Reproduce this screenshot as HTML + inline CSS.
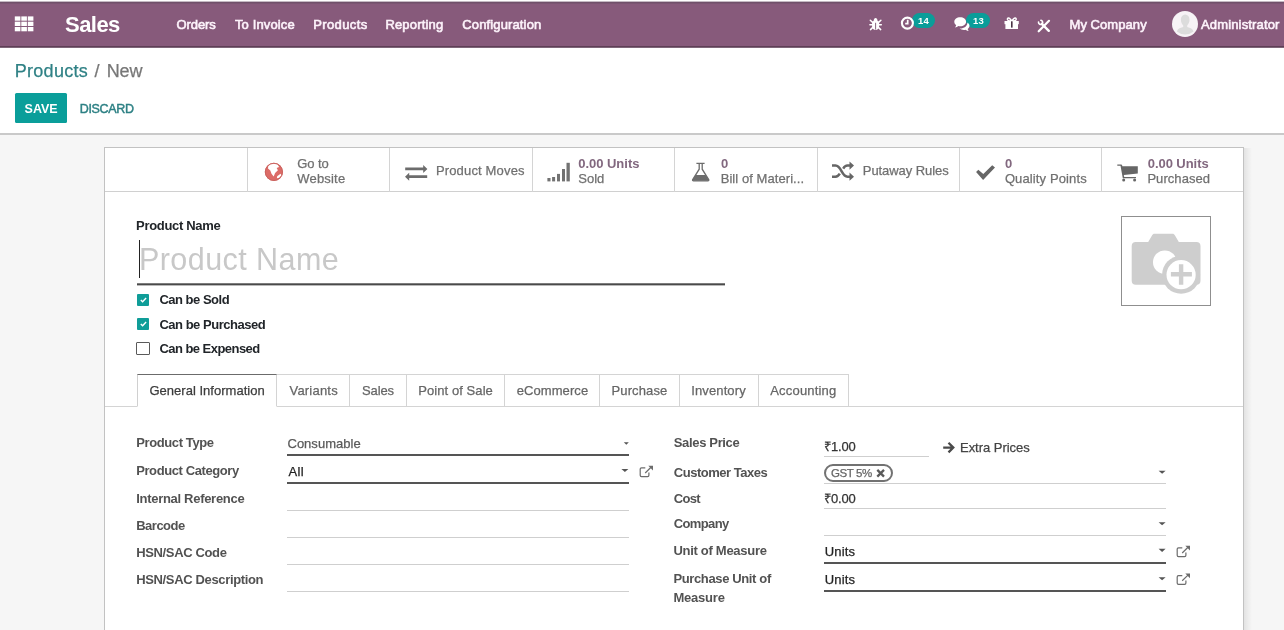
<!DOCTYPE html>
<html lang="en"><head><meta charset="utf-8"><title>Products / New - Odoo</title>
<style>
*{box-sizing:border-box}
html,body{margin:0;padding:0}
body{width:1284px;height:630px;overflow:hidden;position:relative;background:#f6f6f6;font-family:"Liberation Sans",sans-serif;font-size:13px;color:#4c4c4c}
.abs,.t,svg.i{position:absolute}
.t{white-space:pre;line-height:1;text-decoration:none;margin:0;padding:0;display:block}
#nav{left:0;top:0;width:1284px;height:48px;background:linear-gradient(to bottom,#fff 0,#fff 1px,#c5b9c3 1px,#c5b9c3 2px,#70506a 2px,#70506a 3px,#7b5572 3px,#7b5572 4px,#875a7b 4px,#875a7b 46px,#5e3f56 46px,#5e3f56 47px,#7e6578 47px,#7e6578 48px)}
#cp{left:0;top:48px;width:1284px;height:87px;background:#fff;border-bottom:2px solid #c9c9c9}
#sheet{left:104px;top:147px;width:1140px;height:500px;background:#fff;border:1px solid #c2c2c2;box-shadow:none}
#bbox{left:105px;top:148px;width:1138px;height:44px;border-bottom:1px solid #d0d0d0}
.vd{top:148px;width:1px;height:44px;background:#d4d4d4}
#save{left:15px;top:93px;width:52px;height:30px;background:#0a9e9a;border-radius:1.5px}
.badge{height:15.600px;border-radius:7.800px;background:#0a9d99}
#avatar{left:1172px;top:11px;width:26px;height:26px;border-radius:50%;background:#f7f3f6;overflow:hidden}
#nameline{left:137px;top:283px;width:588px;height:3px;background:linear-gradient(to bottom,#7d7d7d 0,#7d7d7d 1px,#4a4a4a 1px,#4a4a4a 2px,#b9b9b9 2px,#b9b9b9 3px)}
#caret0{left:139px;top:240px;width:1px;height:38px;background:#222}
.cb{left:137px;width:12px;height:12px;background:#0f9d98;border-radius:1px}
.cb.off{left:136px;width:14px;height:13px;background:#fff;border:1px solid #5a5a5a}
#imgbox{left:1121px;top:216px;width:90px;height:90px;border:1px solid #8f8f8f;background:#fff}
#tabline{left:105px;top:406px;width:1138px;height:1px;background:#d4d4d4}
.tab{top:374px;height:33px;border:1px solid #d4d4d4;border-left:none;background:#fff}
.tab.active{border-left:1px solid #d0d0d0;border-top:1px solid #6b6b6b;border-bottom:1px solid #fff}
.ln{height:1px;background:#cfcfcf}
.ln.dk{height:2px;background:#555}
#texts{position:absolute;left:0;top:0;width:1284px;height:630px;will-change:transform;transform:translateZ(0)}
.tag{left:824px;top:464px;width:69px;height:18px;border:2px solid #727272;border-radius:9px;background:#fff}
svg.i{overflow:visible}
#shadowr{left:1244px;top:148px;width:8px;height:482px;background:linear-gradient(to right,rgba(0,0,0,.08),rgba(0,0,0,0))}

</style></head>
<body>
<div class="abs" id="nav"></div>
<div class="abs" id="cp"></div>
<div class="abs" id="save"></div>
<div class="abs" id="sheet"></div>
<div class="abs" id="shadowr"></div>
<div class="abs" id="bbox"></div>
<div class="abs vd" style="left:247px"></div>
<div class="abs vd" style="left:389px"></div>
<div class="abs vd" style="left:531.5px"></div>
<div class="abs vd" style="left:674px"></div>
<div class="abs vd" style="left:816.5px"></div>
<div class="abs vd" style="left:958.5px"></div>
<div class="abs vd" style="left:1100.5px"></div>
<div class="abs badge" style="left:912px;top:12.600px;width:22.700px"></div>
<div class="abs badge" style="left:966.300px;top:12.600px;width:24px"></div>
<div class="abs" id="avatar"></div>
<div class="abs" id="nameline"></div>
<div class="abs" id="caret0"></div>
<div class="abs cb" style="top:294px"></div>
<div class="abs cb" style="top:318px"></div>
<div class="abs cb off" style="top:342.3px"></div>
<div class="abs" id="imgbox"></div>
<div class="abs" id="tabline"></div>
<div class="abs tab active" style="left:137px;width:140px"></div>
<div class="abs tab" style="left:277px;width:73px"></div>
<div class="abs tab" style="left:350px;width:57px"></div>
<div class="abs tab" style="left:407px;width:98px"></div>
<div class="abs tab" style="left:505px;width:95px"></div>
<div class="abs tab" style="left:600px;width:80px"></div>
<div class="abs tab" style="left:680px;width:78.5px"></div>
<div class="abs tab" style="left:758.5px;width:90.5px"></div>
<!-- field lines -->
<div class="abs ln dk" style="left:287px;top:453.9px;width:342px"></div>
<div class="abs ln dk" style="left:287px;top:481.7px;width:342px"></div>
<div class="abs ln" style="left:287px;top:509.6px;width:342px"></div>
<div class="abs ln" style="left:287px;top:536.8px;width:342px"></div>
<div class="abs ln" style="left:287px;top:563.9px;width:342px"></div>
<div class="abs ln" style="left:287px;top:590.8px;width:342px"></div>
<div class="abs ln" style="left:824px;top:455.9px;width:105px"></div>
<div class="abs ln" style="left:824px;top:483.1px;width:341.7px"></div>
<div class="abs ln" style="left:824px;top:507.9px;width:341.7px"></div>
<div class="abs ln" style="left:824px;top:534.5px;width:341.7px"></div>
<div class="abs ln dk" style="left:824px;top:561.7px;width:341.7px"></div>
<div class="abs ln dk" style="left:824px;top:589.7px;width:341.7px"></div>
<div class="abs tag"></div>

<!-- apps grid -->
<svg class="i" style="left:0;top:0" width="1284" height="630" viewBox="0 0 1284 630">
<g fill="#fff">
<rect x="14.8" y="16.4" width="5.6" height="4.3"/><rect x="21.3" y="16.4" width="5.6" height="4.3"/><rect x="27.8" y="16.4" width="5.6" height="4.3"/>
<rect x="14.8" y="21.7" width="5.6" height="4.3"/><rect x="21.3" y="21.7" width="5.6" height="4.3"/><rect x="27.8" y="21.7" width="5.6" height="4.3"/>
<rect x="14.8" y="27" width="5.6" height="4.3"/><rect x="21.3" y="27" width="5.6" height="4.3"/><rect x="27.8" y="27" width="5.6" height="4.3"/>
</g>
<!-- bug -->
<g fill="#fff" stroke="#fff" stroke-linecap="round">
<path d="M872.100 23.300c0-1.200.600-2 1.500-2.300.100-1.800 1-2.900 2-2.900s1.900 1.100 2 2.900c.900.300 1.500 1.100 1.500 2.300v3.200c0 1.900-1.600 3.400-3.500 3.400s-3.500-1.500-3.500-3.400z" stroke="none"/>
<path d="M869.900 24.800h11.400M870.300 20.200l2.300 2.200M880.900 20.200l-2.300 2.200M870.500 29.600l2.300-2.200M880.700 29.600l-2.300-2.200" stroke-width="1.500" fill="none"/>
<path d="M875.600 23.200v6" stroke="#7a5470" stroke-width=".9" fill="none"/>
</g>
<!-- clock -->
<g fill="none" stroke="#fff">
<circle cx="907.4" cy="23.1" r="5.500" stroke-width="2.100"/>
<path d="M907.700 19.800v3.900h-2.500" stroke-width="1.700"/>
</g>
<!-- comments -->
<g fill="#fff">
<path d="M960.2 17.2c3.3 0 5.9 2 5.9 4.5s-2.6 4.5-5.9 4.500c-.6 0-1.200-.1-1.800-.2-.9.800-2.100 1.300-3.400 1.400.6-.6 1.100-1.400 1.200-2.300-1.200-.800-1.900-2-1.900-3.400 0-2.500 2.600-4.500 5.900-4.500z"/>
<path d="M967.400 22.400c1.300.8 2.100 2 2.100 3.300 0 1.300-.7 2.400-1.800 3.200.1.800.5 1.500 1.100 2.100-1.200-.1-2.400-.6-3.200-1.300-.6.100-1.100.2-1.700.2-1.700 0-3.200-.5-4.300-1.400.2 0 .4 0 .600 0 3.900 0 7.200-2.500 7.200-5.800 0-.1 0-.2 0-.3z"/>
</g>
<!-- gift -->
<g fill="#fff">
<path d="M1004.500 21h14.300v3.200h-14.300z"/>
<path d="M1005.400 24h12.600v5h-12.600z"/>
<path d="M1011.700 21.200c-1-2-2.200-3.500-3.400-3.300-1 .200-1.200 1.500-.400 2.300.700.600 2.200 1 3.800 1zm.200 0c1-2 2.200-3.500 3.400-3.300 1 .200 1.200 1.500.400 2.300-.700.600-2.200 1-3.800 1z" fill="none" stroke="#fff" stroke-width="1.500"/>
<rect x="1011" y="21.300" width="1.600" height="6.300" fill="#4a3345"/>
</g>
<!-- tools -->
<g fill="none" stroke="#fff" stroke-linecap="round">
<path d="M1038.700 31.300l10.300-10.500" stroke-width="2.200"/>
<path d="M1041.800 23.800l7 7" stroke-width="2.400"/>
<path d="M1038.500 22a2.300 2.300 0 0 0 3.300 2.300M1040.900 20.300a2.300 2.300 0 0 1 1.600 3.200" stroke-width="1.600"/>
</g>
<!-- avatar silhouette -->
<g fill="#dcdcdc">
<path d="M1185.200 14.600c2.600 0 4.300 2.100 4.300 5.200 0 2.400-1 4.500-2.300 5.600v1.500c3.300.800 5.600 2 6.300 4.500a13 13 0 0 1-16.600 0c.700-2.500 3-3.700 6.300-4.500v-1.500c-1.300-1.100-2.300-3.200-2.300-5.600 0-3.100 1.700-5.200 4.300-5.200z"/>
</g>
<!-- globe -->
<g>
<circle cx="273.900" cy="171.900" r="9.100" fill="#dc6b67"/>
<path d="M268.300 165.800c2.500-2.200 6.500-3 9.300-1.200l1.500 2.300-2.400 1.200 1.200 2.200-2.800 2.600-1.400 3.500-2.200-2.600-1.200-3.200-2.300-2.200z" fill="#fff"/>
<path d="M277.200 176.300l3.300-2.500 1.200 1.400-2.300 2.600-2.500.5z" fill="#fff"/>
<circle cx="273.900" cy="171.900" r="8.600" fill="none" stroke="#c9635f" stroke-width="1"/>
</g>
<!-- exchange -->
<g fill="#6c6c6c">
<path d="M405.200 167.500h18v-2.600l4.200 4-4.200 4v-2.600h-18z"/>
<path d="M427.200 175.300h-18v-2.600l-4.200 4 4.200 4v-2.600h18z"/>
</g>
<!-- signal -->
<g fill="#727272">
<rect x="547.400" y="178" width="3.100" height="3.400"/><rect x="552.100" y="177" width="3" height="4.400"/><rect x="557" y="173.900" width="3" height="7.500"/><rect x="562" y="169" width="3" height="12.400"/><rect x="566.500" y="162.800" width="3.300" height="18.600"/>
</g>
<!-- flask -->
<g>
<path d="M696.400 163.400h8.200M699.200 163.600v5.600l-6.500 10.400c-.400.700 0 1.300.800 1.300h14.400c.800 0 1.200-.600.800-1.300l-6.500-10.400v-5.600" fill="none" stroke="#6c6c6c" stroke-width="1.300"/>
<path d="M695.500 175h10.100l3 4.800c.300.600 0 1-.700 1h-14.700c-.700 0-1-.400-.700-1z" fill="#6c6c6c"/>
</g>
<!-- shuffle -->
<g fill="none" stroke="#666" stroke-width="2.500">
<path d="M832 165.600h3.500c6 0 6 11.100 12 11.100h3"/>
<path d="M832 176.700h3.500c2 0 3.300-1.300 4.300-3M843.200 168.600c1-1.700 2.300-3 4.300-3h3"/>
<path d="M849.500 161.500l4.500 4.100-4.500 4.100zM849.500 172.600l4.500 4.100-4.500 4.100z" fill="#666" stroke="none"/>
</g>
<!-- check -->
<path d="M976.100 171.900l2.200-2.100 5 4.100 8.900-8.700 2.800 2.300-11.900 12.500z" fill="#666"/>
<!-- cart -->
<g fill="#666">
<path d="M1117.300 164.400h3.900c.5 0 .8.300.9.800l.3 1.100h15.400v7.300l-14 1.300.4 2h11.800v1.300h-13.200l-2.300-12.500h-3.200z"/>
<circle cx="1123.700" cy="180" r="1.500"/><circle cx="1134.600" cy="180" r="1.500"/>
</g>
<!-- carets -->
<g fill="#555">
<path d="M623.800 442.200h5l-2.500 2.600z"/>
<path d="M621.400 469h7l-3.500 3.100z"/>
<path d="M1158.600 470.700h7l-3.500 3.100z"/>
<path d="M1158.600 522.200h7l-3.500 3.100z"/>
<path d="M1158.600 548.800h7l-3.500 3.100z"/>
<path d="M1158.600 577.200h7l-3.500 3.100z"/>
</g>
<!-- external links -->
<g fill="none" stroke="#6c6c6c" stroke-width="1.200">
<g id="ext"><path d="M648.900 472.600v2.700c0 .800-.500 1.300-1.300 1.300h-6.100c-.800 0-1.300-.500-1.300-1.300v-6.200c0-.800.500-1.300 1.300-1.300h3.800M645.200 473l5.800-5.700"/><path d="M648.300 465.800h4.700v4.700z" fill="#6c6c6c" stroke="none"/></g>
<use href="#ext" x="537" y="80"/>
<use href="#ext" x="537" y="107.800"/>
</g>
<!-- arrow right -->
<path d="M943.200 447.600h9.300M948.500 442.800l4.800 4.800-4.800 4.800" fill="none" stroke="#4a4a4a" stroke-width="2.300"/>
<!-- tag x -->
<path d="M877.300 469.900l6.700 6.700M884 469.900l-6.700 6.700" stroke="#5a5a5a" stroke-width="2.300" fill="none"/>
<!-- checkbox ticks -->
<path d="M140.800 300l1.800 1.700 3.500-3.700" fill="none" stroke="#fff" stroke-width="1.400"/>
<path d="M140.800 324l1.800 1.700 3.500-3.700" fill="none" stroke="#fff" stroke-width="1.400"/>
<!-- camera placeholder -->
<g>
<path d="M1135.700 242h12.500l3.800-6.500c.6-1.100 1.400-1.700 2.600-1.700h17.800c1.200 0 2 .6 2.600 1.700l3.800 6.500h17.700c2.500 0 4 1.500 4 4v34.800c0 2.500-1.500 4-4 4h-60.800c-2.500 0-4-1.500-4-4v-34.800c0-2.500 1.500-4 4-4z" fill="#cecece"/>
<circle cx="1164.800" cy="262.200" r="11.800" fill="#fff"/>
<circle cx="1181.100" cy="274.700" r="19" fill="#cecece"/>
<circle cx="1181.100" cy="274.700" r="14.600" fill="#fff"/>
<path d="M1170.900 274.300h21M1181.100 264.200v20.600" stroke="#cecece" stroke-width="4.400" fill="none"/>
</g>
</svg>


<div id="texts">
<a class="t" style="left:65.12px;top:14.00px;font-size:22px;font-weight:700;color:#fff;letter-spacing:-0.580px;">Sales</a>
<a class="t" style="left:176.48px;top:18.20px;font-size:13px;font-weight:400;color:#fdf3fb;letter-spacing:-0.073px;-webkit-text-stroke:.6px #fdf3fb;">Orders</a>
<a class="t" style="left:234.98px;top:18.20px;font-size:13px;font-weight:400;color:#fdf3fb;letter-spacing:0.125px;-webkit-text-stroke:.6px #fdf3fb;">To Invoice</a>
<a class="t" style="left:313.29px;top:18.20px;font-size:13px;font-weight:400;color:#fdf3fb;letter-spacing:0.364px;-webkit-text-stroke:.6px #fdf3fb;">Products</a>
<a class="t" style="left:385.39px;top:18.20px;font-size:13px;font-weight:400;color:#fdf3fb;letter-spacing:0.186px;-webkit-text-stroke:.6px #fdf3fb;">Reporting</a>
<a class="t" style="left:462.28px;top:18.20px;font-size:13px;font-weight:400;color:#fdf3fb;letter-spacing:0.137px;-webkit-text-stroke:.6px #fdf3fb;">Configuration</a>
<a class="t" style="left:1069.49px;top:18.20px;font-size:13px;font-weight:400;color:#fdf3fb;letter-spacing:0.065px;-webkit-text-stroke:.6px #fdf3fb;">My Company</a>
<a class="t" style="left:1200.98px;top:18.20px;font-size:13px;font-weight:400;color:#fdf3fb;letter-spacing:0.158px;-webkit-text-stroke:.6px #fdf3fb;">Administrator</a>
<span class="t" style="left:918.02px;top:15.90px;font-size:9.5px;font-weight:700;color:#fff;letter-spacing:0.277px;">14</span>
<span class="t" style="left:973.02px;top:15.90px;font-size:9.5px;font-weight:700;color:#fff;letter-spacing:0.177px;">13</span>
<a class="t" style="left:14.64px;top:61.70px;font-size:18px;font-weight:400;color:#2f8185;letter-spacing:0.316px;-webkit-text-stroke:.25px #2f8185;">Products</a>
<span class="t" style="left:94.48px;top:61.70px;font-size:18px;font-weight:400;color:#777;letter-spacing:0.000px;-webkit-text-stroke:.25px #777;">/</span>
<span class="t" style="left:106.64px;top:61.70px;font-size:18px;font-weight:400;color:#777;letter-spacing:-0.078px;-webkit-text-stroke:.25px #777;">New</span>
<span class="t" style="left:24.60px;top:102.90px;font-size:12.5px;font-weight:700;color:#fff;letter-spacing:0.000px;">SAVE</span>
<span class="t" style="left:79.72px;top:102.90px;font-size:12.5px;font-weight:400;color:#2d8084;letter-spacing:-0.344px;-webkit-text-stroke:.45px #2d8084;">DISCARD</span>
<span class="t" style="left:297.28px;top:156.70px;font-size:13px;font-weight:400;color:#707070;letter-spacing:-0.107px;-webkit-text-stroke:.25px #707070;">Go to</span>
<span class="t" style="left:297.28px;top:171.70px;font-size:13px;font-weight:400;color:#707070;letter-spacing:0.189px;-webkit-text-stroke:.25px #707070;">Website</span>
<span class="t" style="left:435.89px;top:164.20px;font-size:13px;font-weight:400;color:#707070;letter-spacing:0.163px;-webkit-text-stroke:.25px #707070;">Product Moves</span>
<span class="t" style="left:578.18px;top:156.70px;font-size:13px;font-weight:700;color:#82687f;letter-spacing:-0.017px;">0.00 Units</span>
<span class="t" style="left:578.18px;top:171.70px;font-size:13px;font-weight:400;color:#707070;letter-spacing:0.046px;-webkit-text-stroke:.25px #707070;">Sold</span>
<span class="t" style="left:721.08px;top:156.70px;font-size:13px;font-weight:700;color:#82687f;letter-spacing:0.000px;">0</span>
<span class="t" style="left:720.69px;top:171.70px;font-size:13px;font-weight:400;color:#707070;letter-spacing:0.063px;-webkit-text-stroke:.25px #707070;">Bill of Materi...</span>
<span class="t" style="left:862.79px;top:164.20px;font-size:13px;font-weight:400;color:#707070;letter-spacing:-0.072px;-webkit-text-stroke:.25px #707070;">Putaway Rules</span>
<span class="t" style="left:1004.88px;top:156.70px;font-size:13px;font-weight:700;color:#82687f;letter-spacing:0.000px;">0</span>
<span class="t" style="left:1004.88px;top:171.70px;font-size:13px;font-weight:400;color:#707070;letter-spacing:0.121px;-webkit-text-stroke:.25px #707070;">Quality Points</span>
<span class="t" style="left:1147.78px;top:156.70px;font-size:13px;font-weight:700;color:#82687f;letter-spacing:-0.061px;">0.00 Units</span>
<span class="t" style="left:1147.39px;top:171.70px;font-size:13px;font-weight:400;color:#707070;letter-spacing:0.063px;-webkit-text-stroke:.25px #707070;">Purchased</span>
<label class="t" style="left:136.09px;top:218.80px;font-size:13px;font-weight:700;color:#212529;letter-spacing:-0.326px;">Product Name</label>
<span class="t" style="left:138.97px;top:243.50px;font-size:30.5px;font-weight:400;color:#c8c8c8;letter-spacing:0.446px;">Product Name</span>
<label class="t" style="left:159.38px;top:292.90px;font-size:13px;font-weight:700;color:#212529;letter-spacing:-0.486px;">Can be Sold</label>
<label class="t" style="left:159.38px;top:317.60px;font-size:13px;font-weight:700;color:#212529;letter-spacing:-0.478px;">Can be Purchased</label>
<label class="t" style="left:159.38px;top:341.80px;font-size:13px;font-weight:700;color:#212529;letter-spacing:-0.536px;">Can be Expensed</label>
<a class="t" style="left:149.48px;top:384.20px;font-size:13px;font-weight:400;color:#3c3c3c;letter-spacing:0.015px;-webkit-text-stroke:.25px #3c3c3c;">General Information</a>
<a class="t" style="left:289.48px;top:384.20px;font-size:13px;font-weight:400;color:#666;letter-spacing:0.205px;-webkit-text-stroke:.25px #666;">Variants</a>
<a class="t" style="left:361.98px;top:384.20px;font-size:13px;font-weight:400;color:#666;letter-spacing:-0.115px;-webkit-text-stroke:.25px #666;">Sales</a>
<a class="t" style="left:418.29px;top:384.20px;font-size:13px;font-weight:400;color:#666;letter-spacing:0.070px;-webkit-text-stroke:.25px #666;">Point of Sale</a>
<a class="t" style="left:516.68px;top:384.20px;font-size:13px;font-weight:400;color:#666;letter-spacing:0.084px;-webkit-text-stroke:.25px #666;">eCommerce</a>
<a class="t" style="left:611.49px;top:384.20px;font-size:13px;font-weight:400;color:#666;letter-spacing:0.120px;-webkit-text-stroke:.25px #666;">Purchase</a>
<a class="t" style="left:691.29px;top:384.20px;font-size:13px;font-weight:400;color:#666;letter-spacing:0.109px;-webkit-text-stroke:.25px #666;">Inventory</a>
<a class="t" style="left:770.28px;top:384.20px;font-size:13px;font-weight:400;color:#666;letter-spacing:0.182px;-webkit-text-stroke:.25px #666;">Accounting</a>
<label class="t" style="left:136.19px;top:436.30px;font-size:13px;font-weight:700;color:#525252;letter-spacing:-0.386px;">Product Type</label>
<label class="t" style="left:136.19px;top:463.80px;font-size:13px;font-weight:700;color:#525252;letter-spacing:-0.401px;">Product Category</label>
<label class="t" style="left:136.19px;top:492.00px;font-size:13px;font-weight:700;color:#525252;letter-spacing:-0.293px;">Internal Reference</label>
<label class="t" style="left:136.19px;top:519.10px;font-size:13px;font-weight:700;color:#525252;letter-spacing:-0.495px;">Barcode</label>
<label class="t" style="left:136.19px;top:546.30px;font-size:13px;font-weight:700;color:#525252;letter-spacing:-0.351px;">HSN/SAC Code</label>
<label class="t" style="left:136.19px;top:573.20px;font-size:13px;font-weight:700;color:#525252;letter-spacing:-0.349px;">HSN/SAC Description</label>
<span class="t" style="left:287.48px;top:436.80px;font-size:13px;font-weight:400;color:#5a5a5a;letter-spacing:0.019px;-webkit-text-stroke:.25px #5a5a5a;">Consumable</span>
<span class="t" style="left:288.38px;top:465.10px;font-size:13px;font-weight:400;color:#222;letter-spacing:0.358px;-webkit-text-stroke:.25px #222;">All</span>
<label class="t" style="left:673.78px;top:436.30px;font-size:13px;font-weight:700;color:#525252;letter-spacing:-0.342px;">Sales Price</label>
<label class="t" style="left:673.78px;top:466.30px;font-size:13px;font-weight:700;color:#525252;letter-spacing:-0.478px;">Customer Taxes</label>
<label class="t" style="left:673.78px;top:492.00px;font-size:13px;font-weight:700;color:#525252;letter-spacing:-0.674px;">Cost</label>
<label class="t" style="left:673.78px;top:517.40px;font-size:13px;font-weight:700;color:#525252;letter-spacing:-0.627px;">Company</label>
<label class="t" style="left:673.39px;top:544.00px;font-size:13px;font-weight:700;color:#525252;letter-spacing:-0.283px;">Unit of Measure</label>
<label class="t" style="left:673.39px;top:572.00px;font-size:13px;font-weight:700;color:#525252;letter-spacing:-0.362px;">Purchase Unit of</label>
<label class="t" style="left:673.39px;top:591.10px;font-size:13px;font-weight:700;color:#525252;letter-spacing:-0.198px;">Measure</label>
<span class="t" style="left:824.04px;top:440.30px;font-size:13px;font-weight:400;color:#333;letter-spacing:-0.151px;-webkit-text-stroke:.25px #333;">₹1.00</span>
<span class="t" style="left:824.04px;top:492.40px;font-size:13px;font-weight:400;color:#333;letter-spacing:-0.151px;-webkit-text-stroke:.25px #333;">₹0.00</span>
<span class="t" style="left:824.79px;top:544.90px;font-size:13px;font-weight:400;color:#222;letter-spacing:0.134px;-webkit-text-stroke:.25px #222;">Units</span>
<span class="t" style="left:824.79px;top:573.10px;font-size:13px;font-weight:400;color:#222;letter-spacing:0.134px;-webkit-text-stroke:.25px #222;">Units</span>
<span class="t" style="left:959.99px;top:441.10px;font-size:13px;font-weight:400;color:#444;letter-spacing:-0.029px;-webkit-text-stroke:.25px #444;">Extra Prices</span>
<span class="t" style="left:830.94px;top:467.80px;font-size:11.5px;font-weight:400;color:#666;letter-spacing:-0.383px;-webkit-text-stroke:.25px #666;">GST 5%</span>
</div>
</body></html>
